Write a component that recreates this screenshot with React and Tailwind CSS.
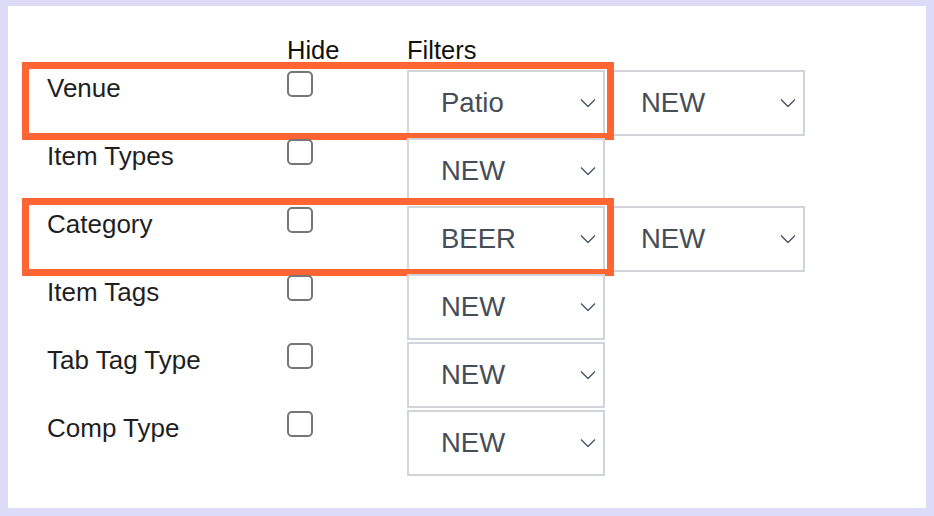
import React from "react";

const rows = [
    { label: "Venue", filters: ["Patio", "NEW"], marked: true },
    { label: "Item Types", filters: ["NEW"] },
    { label: "Category", filters: ["BEER", "NEW"], marked: true },
    { label: "Item Tags", filters: ["NEW"] },
    { label: "Tab Tag Type", filters: ["NEW"] },
    { label: "Comp Type", filters: ["NEW"] },
];

const Chevron = () => (
    <svg width="16" height="9" viewBox="0 0 16 9" fill="none" className="absolute right-[7px] top-1/2 -translate-y-1/2">
        <path d="M1 1l7 7 7-7" stroke="#4b5563" strokeWidth="1.4" />
    </svg>
);

const FilterSelect = ({ value }) => (
    <div className="relative w-[198px] h-[66px] border-2 border-[#d1d5db] bg-white flex items-center pl-[32px] text-[27.5px] text-[#454d56]">
        {value}
        <Chevron />
    </div>
);

const App = () => {
    return (
        <div
            className="w-[934px] h-[516px] bg-[#dedbf9] pt-[6px] pl-[8px] pr-[8px] pb-[8px]"
            style={{ fontFamily: '"Liberation Sans", Arial, sans-serif' }}
        >
            <div className="w-full h-full bg-white pt-[30px] pl-[39px]">
                {/* header */}
                <div className="flex h-[34px] leading-[28px] text-[25.5px] text-[#111]">
                    <div className="w-[240px]" />
                    <div className="w-[120px]">Hide</div>
                    <div>Filters</div>
                </div>

                {rows.map((row, i) => (
                    <div key={i} className="relative flex h-[68px]">
                        <div className="w-[240px] pt-[3px] text-[26px] leading-[30px] text-[#1f1f1f]">{row.label}</div>
                        <div className="w-[120px]">
                            <div className="mt-[1px] w-[26px] h-[26px] border-2 border-[#767676] rounded-[5px] bg-white" />
                        </div>
                        <div className="flex gap-[2px]">
                            {row.filters.map((f, j) => (
                                <FilterSelect key={j} value={f} />
                            ))}
                        </div>
                        {row.marked && (
                            <div className="absolute left-[-25px] top-[-8px] w-[592px] h-[78px] border-[7px] border-[#ff6433] pointer-events-none" />
                        )}
                    </div>
                ))}
            </div>
        </div>
    );
};

export default App;
